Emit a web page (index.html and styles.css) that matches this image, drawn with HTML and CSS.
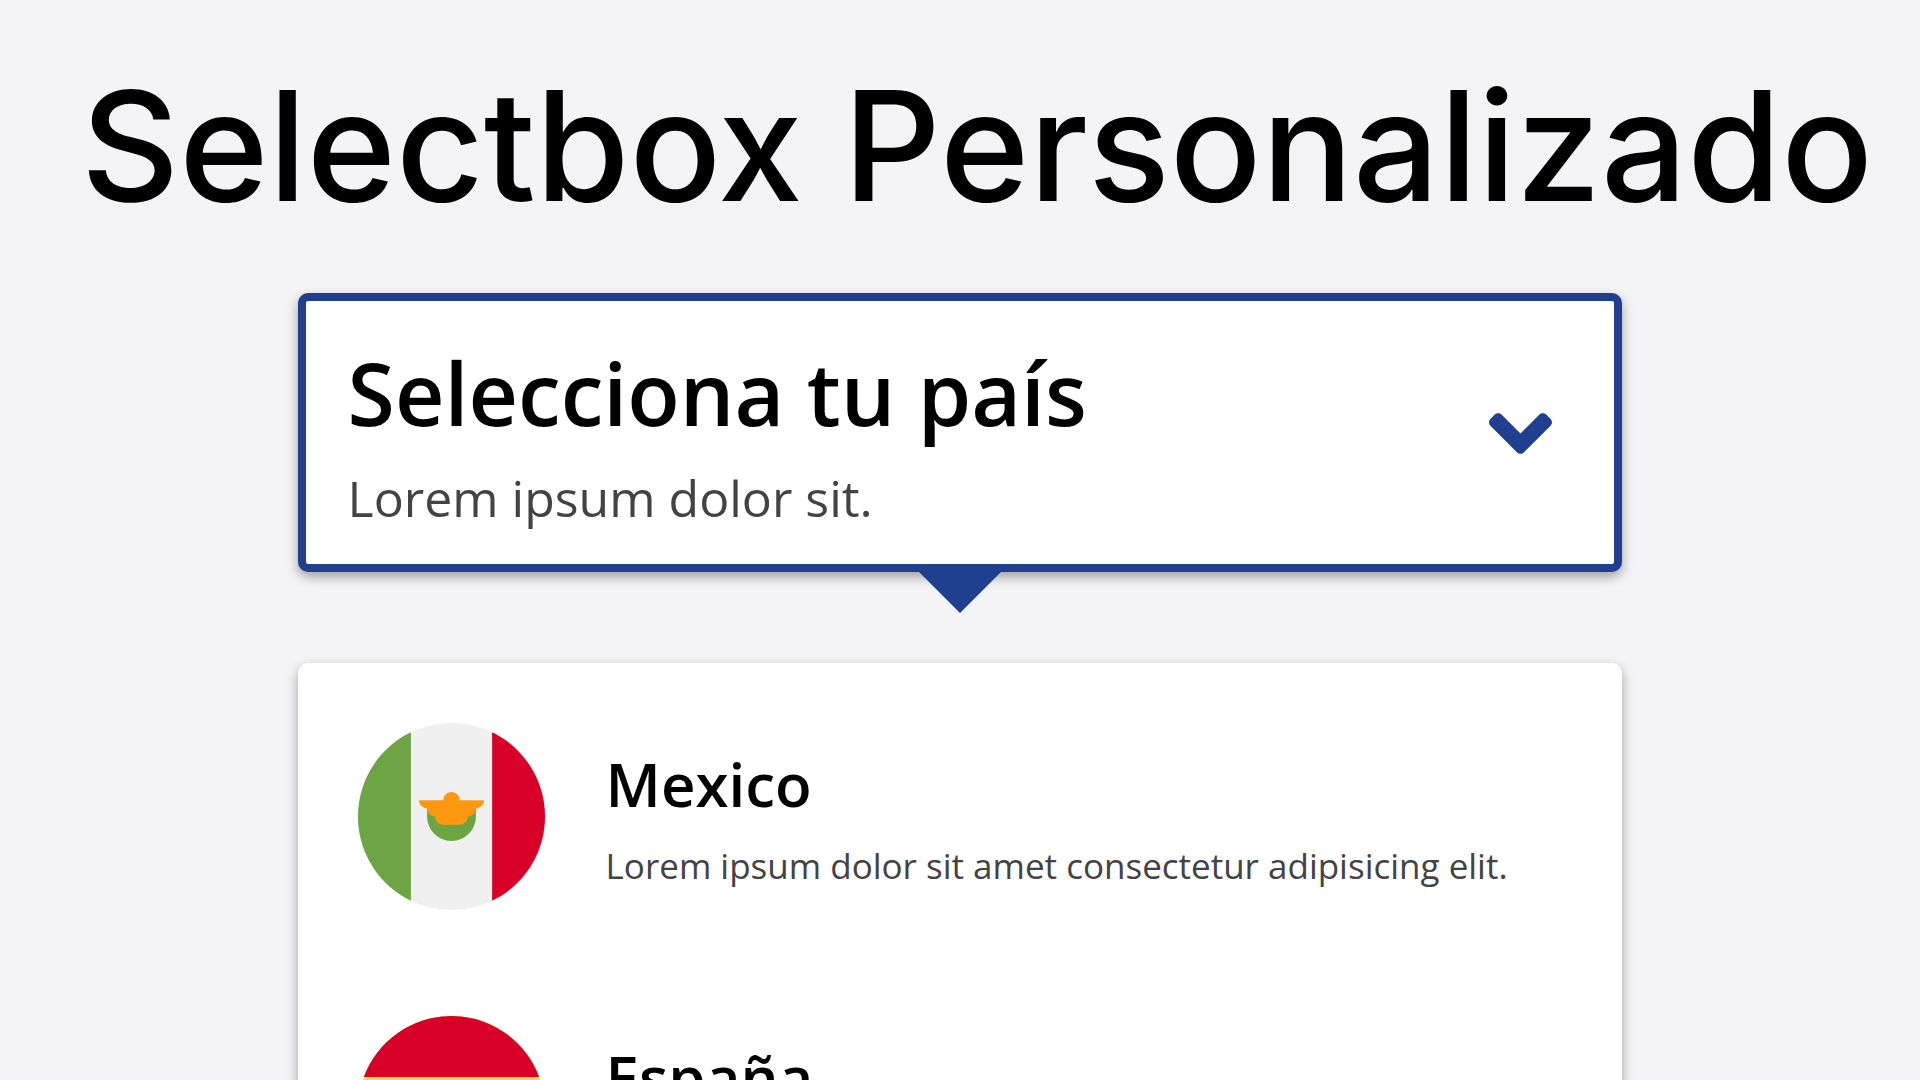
FILE: index.html
```html
<!DOCTYPE html>
<html lang="es">
<head>
  <meta charset="utf-8">
  <meta name="viewport" content="width=device-width, initial-scale=1">
  <title>Selectbox Personalizado</title>
  <link rel="stylesheet" href="styles.css">
</head>
<body>
  <main class="page">
    <h1 class="page-title">Selectbox Personalizado</h1>
    <div class="selectbox">
      <button class="select" type="button" aria-expanded="true" aria-controls="options">
        <span class="select-text">
          <span class="select-title">Selecciona tu país</span>
          <span class="select-description">Lorem ipsum dolor sit.</span>
        </span>
        <svg class="chevron" viewBox="0 152 320 208" aria-hidden="true">
          <path d="M143 352.3L7 216.3c-9.4-9.4-9.4-24.6 0-33.9l22.6-22.6c9.4-9.4 24.6-9.4 33.9 0l96.4 96.4 96.4-96.4c9.4-9.4 24.6-9.4 33.9 0l22.6 22.6c9.4 9.4 9.4 24.6 0 33.9l-136 136c-9.2 9.4-24.4 9.4-33.8 0z"/>
        </svg>
      </button>
      <ul class="options" id="options">
        <li>
          <a class="option" href="#mexico">
            <svg class="flag" viewBox="0 0 512 512" aria-hidden="true">
              <circle cx="256" cy="256" r="256" fill="#f0f0f0"/>
              <path fill="#d80027" d="M512 256c0-101.494-59.065-189.19-144.696-230.598v461.195C452.935 445.19 512 357.494 512 256z"/>
              <path fill="#6da544" d="M0 256c0 101.494 59.065 189.19 144.696 230.598V25.402C59.065 66.81 0 154.506 0 256z"/>
              <path fill="#6da544" d="M189.217 256c0 36.883 29.9 66.783 66.783 66.783s66.783-29.9 66.783-66.783v-22.261H189.217z"/>
              <path fill="#ff9811" d="M345.043 211.478H278.26c0-12.294-9.967-22.261-22.261-22.261s-22.261 9.967-22.261 22.261h-66.783c0 12.295 10.709 22.261 23.002 22.261h-.741c0 12.295 9.966 22.261 22.261 22.261 0 12.295 9.966 22.261 22.261 22.261h44.522c12.295 0 22.261-9.966 22.261-22.261 12.295 0 22.261-9.966 22.261-22.261h-.742c12.295 0 23.003-9.967 23.003-22.261z"/>
            </svg>
            <span class="option-text">
              <span class="option-title">Mexico</span>
              <span class="option-description">Lorem ipsum dolor sit amet consectetur adipisicing elit.</span>
            </span>
          </a>
        </li>
        <li>
          <a class="option" href="#espana">
            <svg class="flag" viewBox="0 0 512 512" aria-hidden="true">
              <circle cx="256" cy="256" r="256" fill="#ffda44"/>
              <path fill="#d80027" d="M496.077 166.957C459.906 69.473 366.071 0 256 0S52.094 69.473 15.923 166.957zM15.923 345.043C52.094 442.527 145.929 512 256 512s203.906-69.473 240.077-166.957z"/>
            </svg>
            <span class="option-text">
              <span class="option-title">España</span>
              <span class="option-description">Lorem ipsum dolor sit amet consectetur adipisicing elit.</span>
            </span>
          </a>
        </li>
      </ul>
    </div>
  </main>
</body>
</html>
```
FILE: styles.css
```css
* {
  box-sizing: border-box;
}

body {
  margin: 0;
  background: #f4f4f6;
  color: #000;
  font-family: "Open Sans", sans-serif;
}

.page {
  padding: 50px 0;
}

.page-title {
  margin: 0 0 51px;
  padding-left: 34px;
  font-family: Inter, sans-serif;
  font-size: 152px;
  font-weight: 500;
  line-height: 192px;
  text-align: center;
  white-space: nowrap;
}

.selectbox {
  width: 69%;
  margin: 0 auto;
}

.select {
  position: relative;
  display: flex;
  align-items: center;
  justify-content: space-between;
  width: 100%;
  margin: 0 0 91px;
  padding: 40px 62px 38px 42px;
  border: 8px solid #213f8f;
  border-radius: 10px;
  background: #fff;
  box-shadow: 0 5px 12px rgba(0, 0, 0, 0.35);
  color: inherit;
  font: inherit;
  text-align: left;
  cursor: pointer;
}

/* Pointer hanging from the open select */
.select::after {
  content: "";
  position: absolute;
  top: 100%;
  left: 50%;
  margin-left: -49px;
  border: 49px solid transparent;
  border-top-color: #213f8f;
  border-bottom: 0;
}

.select-text,
.option-text {
  display: flex;
  flex-direction: column;
  gap: 26px;
}

.select-title {
  font-size: 86px;
  font-weight: 600;
  line-height: 103px;
}

.select-description {
  color: #434343;
  font-size: 50px;
  line-height: 56px;
}

.chevron {
  width: 63px;
  height: 41px;
  fill: #213f8f;
}

.options {
  margin: 0;
  padding: 7px 0;
  border-radius: 10px;
  background: #fff;
  box-shadow: 0 5px 12px rgba(0, 0, 0, 0.35);
  list-style: none;
}

.option {
  display: flex;
  align-items: center;
  gap: 61px;
  padding: 53px 60px;
  color: inherit;
  text-decoration: none;
}

.flag {
  flex: none;
  width: 187px;
  height: 187px;
}

.option-title {
  font-size: 60px;
  font-weight: 600;
  line-height: 72px;
}

.option-description {
  color: #434343;
  font-size: 35px;
  line-height: 40px;
}
```
